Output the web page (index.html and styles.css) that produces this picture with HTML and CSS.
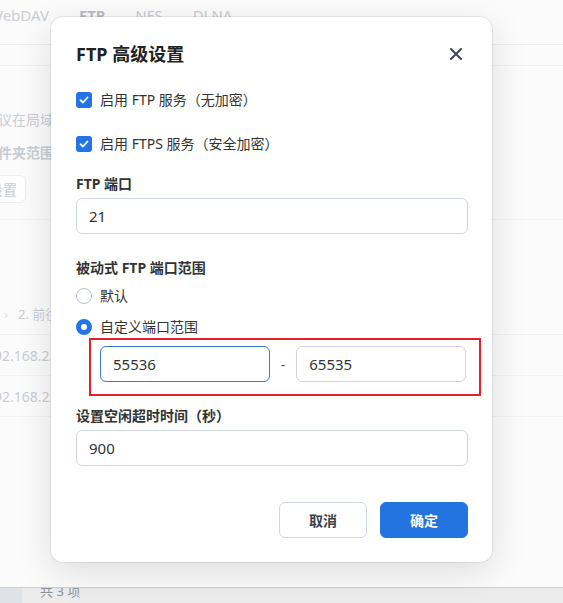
FILE: index.html
```html
<!DOCTYPE html>
<html>
<head>
    <title>FTP 高级设置</title>
    <link rel="stylesheet" href="styles.css">
</head>
<body>
    <div class="page">
        <div class="tabs">
            <span class="tab">WebDAV</span>
            <span class="tab active">FTP</span>
            <span class="tab">NFS</span>
            <span class="tab">DLNA</span>
        </div>
        <div class="sub-line"></div>
        <div class="intro">
            <p class="desc">协议在局域网内共享文件</p>
            <p class="desc strong">文件夹范围</p>
            <button class="ghost-btn">设置</button>
        </div>
        <div class="steps">
            <span class="step-arrow">›</span>
            <span>2. 前往设置</span>
        </div>
        <div class="row">192.168.2.23</div>
        <div class="row">192.168.2.25</div>
    </div>
    <div class="footer">
        <span class="footer-icon"></span>
        <span class="footer-text">共 3 项</span>
    </div>

    <div class="dialog">
        <div class="dialog-header">
            <h2>FTP 高级设置</h2>
            <button class="close" aria-label="关闭">
                <svg width="12" height="12" viewBox="0 0 12 12">
                    <path d="M1 1L11 11M11 1L1 11" stroke="#3d4656" stroke-width="2" stroke-linecap="round"/>
                </svg>
            </button>
        </div>

        <label class="check">
            <span class="box">
                <svg width="10" height="10" viewBox="0 0 10 10"><path d="M1.5 5.2L4 7.5L8.5 2.5" fill="none" stroke="#fff" stroke-width="1.8" stroke-linecap="round" stroke-linejoin="round"/></svg>
            </span>
            启用 FTP 服务（无加密）
        </label>
        <label class="check second">
            <span class="box">
                <svg width="10" height="10" viewBox="0 0 10 10"><path d="M1.5 5.2L4 7.5L8.5 2.5" fill="none" stroke="#fff" stroke-width="1.8" stroke-linecap="round" stroke-linejoin="round"/></svg>
            </span>
            启用 FTPS 服务（安全加密）
        </label>

        <div class="field-label">FTP 端口</div>
        <div class="input">21</div>

        <div class="field-label gap">被动式 FTP 端口范围</div>
        <label class="radio first"><span class="dot"></span>默认</label>
        <label class="radio"><span class="dot on"></span>自定义端口范围</label>

        <div class="range">
            <div class="input focus">55536</div>
            <span class="dash">-</span>
            <div class="input">65535</div>
            <div class="mark"></div>
        </div>

        <div class="field-label gap">设置空闲超时时间（秒）</div>
        <div class="input">900</div>

        <div class="dialog-footer">
            <button class="btn">取消</button>
            <button class="btn primary">确定</button>
        </div>
    </div>
</body>
</html>
```

FILE: styles.css
```css
body {
    margin: 0;
    background-color: #fafafa;
    font-family: "Noto Sans", "Noto Sans CJK SC", sans-serif;
    overflow: hidden;
    height: 603px;
}
.page {
    height: 587px;
    background-color: #fbfbfb;
    color: #c9cdd3;
    font-size: 14px;
    overflow: hidden;
}
.tabs {
    display: flex;
    gap: 30px;
    margin-left: -11px;
    padding-top: 2px;
    border-bottom: 1px solid #eceef1;
    box-sizing: border-box;
    height: 45px;
    font-size: 15px;
    line-height: 26px;
}
.tab.active {
    font-weight: 700;
    color: #b9bec5;
}
.sub-line {
    height: 20px;
    border-bottom: 1px solid #f0f1f3;
}
.intro {
    padding: 43px 0 16px;
    margin-left: -16px;
    border-bottom: 1px solid #f0f1f3;
}
.desc {
    margin: 0 0 11px;
    line-height: 22px;
}
.desc.strong {
    font-weight: 700;
}
.ghost-btn {
    font-family: inherit;
    font-size: 14px;
    color: #c9cdd3;
    background: #fff;
    border: 1px solid #eceef1;
    border-radius: 6px;
    height: 28px;
    padding: 0 8px 0 8px;
    margin-left: -4px;
}
.steps {
    margin-top: 82px;
    padding-left: 4px;
    display: flex;
    gap: 10px;
    font-size: 13px;
    line-height: 24px;
    border-bottom: 1px solid #f0f1f3;
    padding-bottom: 8px;
}
.step-arrow {
    color: #d3e0f0;
}
.row {
    margin-left: -14px;
    height: 38px;
    line-height: 38px;
    padding-top: 2px;
    font-size: 14px;
    border-bottom: 1px solid #f0f1f3;
}
.footer {
    display: flex;
    align-items: flex-start;
    height: 16px;
    border-top: 1px solid #cfd1d4;
    background-color: #ececec;
    overflow: hidden;
}
.footer-icon {
    width: 22px;
    height: 16px;
    background-color: #dfe2e6;
}
.footer-text {
    margin-left: 18px;
    margin-top: -7px;
    font-size: 13px;
    color: #8e949b;
}

.dialog {
    position: absolute;
    left: 51px;
    top: 17px;
    width: 441px;
    box-sizing: border-box;
    padding: 24px 24px 24px 25px;
    background-color: #fff;
    border-radius: 12px;
    box-shadow: 0 0 0 1px rgba(0, 0, 0, 0.07), 0 10px 36px rgba(0, 0, 0, 0.12);
    color: #333;
    font-size: 14px;
}
.dialog-header {
    display: flex;
    align-items: center;
    justify-content: space-between;
    height: 26px;
}
.dialog-header h2 {
    margin: 0;
    font-size: 18px;
    line-height: 26px;
    font-weight: 700;
    color: #222;
}
.close {
    border: none;
    background: none;
    padding: 0;
    width: 24px;
    height: 24px;
    display: flex;
    align-items: center;
    justify-content: center;
}
.check,
.radio {
    display: flex;
    align-items: center;
    gap: 8px;
    height: 22px;
    line-height: 22px;
    color: #333;
}
.check {
    margin-top: 22px;
}
.box {
    width: 16px;
    height: 16px;
    border-radius: 3px;
    background-color: #2474e5;
    display: flex;
    align-items: center;
    justify-content: center;
}
.field-label {
    margin-top: 19px;
    margin-bottom: 4px;
    line-height: 20px;
    font-weight: 700;
    color: #333;
}
.field-label.gap {
    margin-top: 24px;
}
.input {
    height: 36px;
    box-sizing: border-box;
    border: 1px solid #cfd6e0;
    border-radius: 6px;
    padding: 0 12px;
    line-height: 34px;
    font-size: 15px;
    color: #333;
    background-color: #fff;
}
.input.focus {
    border-color: #3a7bd5;
}
.radio.first {
    margin-top: 7px;
}
.radio + .radio {
    margin-top: 9px;
}
.dot {
    width: 16px;
    height: 16px;
    box-sizing: border-box;
    border-radius: 50%;
    border: 1px solid #b9c3d0;
}
.dot.on {
    border: 5px solid #2474e5;
}
.range {
    position: relative;
    display: grid;
    grid-template-columns: 1fr auto 1fr;
    align-items: center;
    gap: 10px;
    margin: 8px 2px 0 24px;
}
.dash {
    color: #555;
    padding: 0 1px;
}
.mark {
    position: absolute;
    left: -11px;
    right: -15px;
    top: -8px;
    bottom: -14px;
    border: 2px solid #e3212b;
}
.dialog-footer {
    display: flex;
    justify-content: flex-end;
    gap: 13px;
    margin-top: 36px;
}
.btn {
    width: 88px;
    height: 36px;
    border-radius: 6px;
    border: 1px solid #cfd6e0;
    background-color: #fff;
    font-family: inherit;
    font-size: 14px;
    font-weight: 700;
    color: #3a3f47;
    cursor: pointer;
}
.btn.primary {
    background-color: #2274e0;
    border-color: #2274e0;
    color: #fff;
}
```
